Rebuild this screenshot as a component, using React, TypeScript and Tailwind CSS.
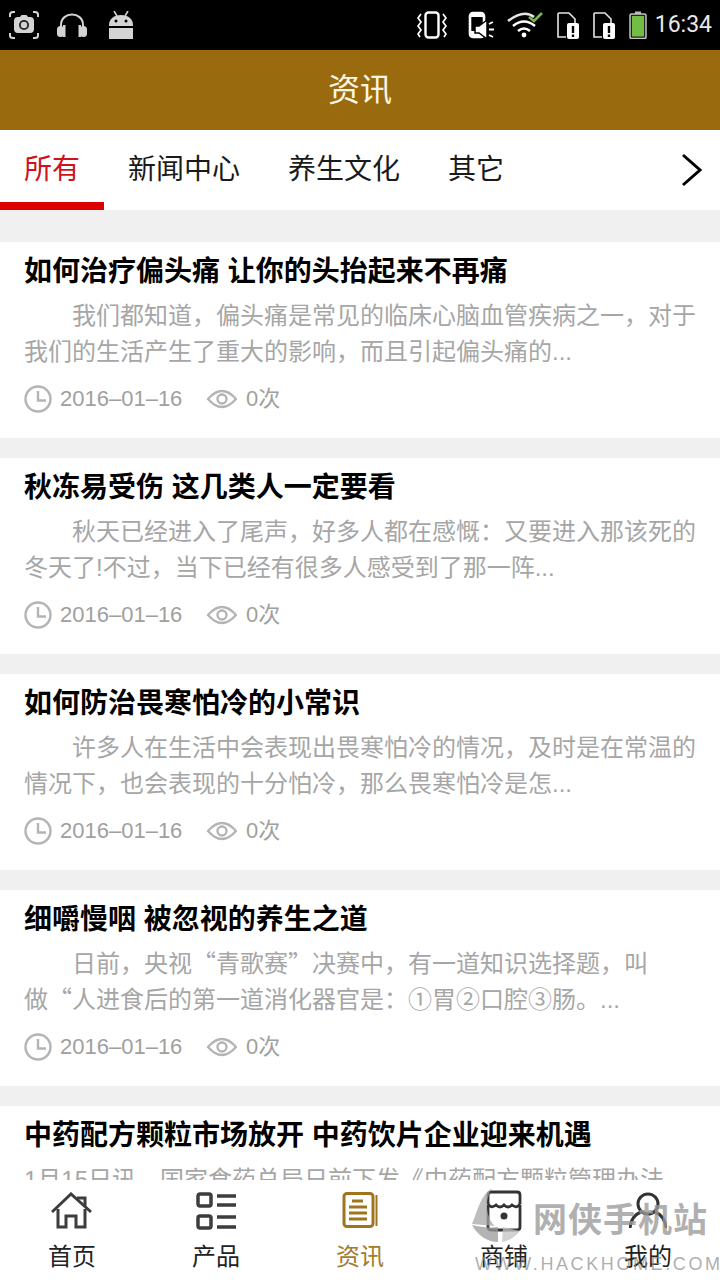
const FONT = 'font-["Liberation_Sans","Noto_Sans_CJK_SC",sans-serif]'

type Article = { title: string; lines: React.ReactNode[]; noIndent?: boolean }

const articles: Article[] = [
  {
    title: '如何治疗偏头痛 让你的头抬起来不再痛',
    lines: ['我们都知道，偏头痛是常见的临床心脑血管疾病之一，对于', '我们的生活产生了重大的影响，而且引起偏头痛的...'],
  },
  {
    title: '秋冻易受伤 这几类人一定要看',
    lines: ['秋天已经进入了尾声，好多人都在感慨：又要进入那该死的', '冬天了!不过，当下已经有很多人感受到了那一阵...'],
  },
  {
    title: '如何防治畏寒怕冷的小常识',
    lines: ['许多人在生活中会表现出畏寒怕冷的情况，及时是在常温的', '情况下，也会表现的十分怕冷，那么畏寒怕冷是怎...'],
  },
  {
    title: '细嚼慢咽 被忽视的养生之道',
    lines: [
      <>日前，央视<span className='font-["Noto_Sans_CJK_SC"] leading-none'>“青歌赛”</span>决赛中，有一道知识选择题，叫</>,
      <>做<span className='font-["Noto_Sans_CJK_SC"] leading-none'>“</span>人进食后的第一道消化器官是：①胃②口腔③肠。...</>,
    ],
  },
  {
    title: '中药配方颗粒市场放开 中药饮片企业迎来机遇',
    lines: ['1月15日讯，国家食药总局日前下发《中药配方颗粒管理办法', ''],
    noIndent: true,
  },
]

function StatusBar() {
  return (
    <div className="h-[50px] shrink-0 bg-black flex items-center justify-between pr-[8px] pl-[9px]">
      <div className="flex items-center gap-[18px]">
        <svg width="30" height="28" viewBox="0 0 30 28" fill="none" stroke="#d4d4d4">
          <path d="M1 6V3.5Q1 1 4 1H6M24 1H26Q29 1 29 3.5V6M1 22V24.5Q1 27 4 27H6M24 27H26Q29 27 29 24.5V22" strokeWidth="2" />
          <rect x="5" y="6" width="20" height="16" rx="4" fill="#d4d4d4" stroke="none" />
          <path d="M11 6L12.5 4H17.5L19 6Z" fill="#d4d4d4" stroke="none" />
          <circle cx="15" cy="14" r="5" fill="#222" stroke="none" />
          <circle cx="15" cy="14" r="3.2" fill="#d4d4d4" stroke="none" />
        </svg>
        <svg width="30" height="26" viewBox="0 0 30 26" fill="none">
          <path d="M4 15V13C4 -1 26 -1 26 13V15" stroke="#d4d4d4" strokeWidth="2" />
          <rect x="0" y="14" width="7" height="11" rx="3.5" fill="#d4d4d4" />
          <rect x="23" y="14" width="7" height="11" rx="3.5" fill="#d4d4d4" />
          <rect x="6" y="13" width="2.5" height="12" fill="#d4d4d4" />
          <rect x="21.5" y="13" width="2.5" height="12" fill="#d4d4d4" />
        </svg>
        <svg width="26" height="28" viewBox="0 0 26 28" fill="#d4d4d4" className="ml-[3px]">
          <path d="M1 14C1 8 6 4 13 4C20 4 25 8 25 14V15H1Z" />
          <path d="M6 0L9 5M20 0L17 5" stroke="#d4d4d4" strokeWidth="1.6" />
          <rect x="1" y="17" width="24" height="11" />
          <circle cx="8" cy="10" r="1.5" fill="#000" />
          <circle cx="18" cy="10" r="1.5" fill="#000" />
        </svg>
      </div>
      <div className="flex items-center">
        <svg width="30" height="28" viewBox="0 0 30 28" fill="none" stroke="#fff" strokeWidth="2.4" className="mr-[21px]">
          <rect x="8.5" y="1.500" width="13" height="25" rx="3" />
          <path d="M4 3L1 7L4 11L1 15L4 19L1 23L3 26M26 3L29 7L26 11L29 15L26 19L29 23L27 26" strokeWidth="1.7" />
        </svg>
        <svg width="26" height="28" viewBox="0 0 26 28" className="mr-[13px]">
          <rect x="2" y="2" width="14" height="24" rx="3" fill="none" stroke="#fff" strokeWidth="2.6" />
          <rect x="2" y="2" width="14" height="4" fill="#fff" />
          <rect x="2" y="20" width="14" height="6" fill="#fff" />
          <path d="M19 9L11 15H7V22H11L19 28Z" fill="#fff" stroke="#000" strokeWidth="1.500" />
          <path d="M21 13L25 11M21 18.500H26M21 24L25 26" stroke="#fff" strokeWidth="1.800" />
        </svg>
        <svg width="36" height="26" viewBox="0 0 36 26" fill="none" className="mr-[14px]">
          <path d="M1 9Q17 -3 27 5" stroke="#e5e5e5" strokeWidth="2.6" />
          <path d="M6 14Q17 5 28 14" stroke="#fff" strokeWidth="2.6" />
          <path d="M11 19Q17 14 23 19" stroke="#fff" strokeWidth="2.6" />
          <circle cx="17" cy="23" r="2.4" fill="#fff" />
          <path d="M22 5L27 9L35 1" stroke="#7ab648" strokeWidth="2.6" />
        </svg>
        <SimIcon className="mr-[14px]" />
        <SimIcon className="mr-[14px]" />
        <svg width="18" height="28" viewBox="0 0 18 28" className="mr-[8px]">
          <rect x="6" y="0.500" width="6" height="3" fill="#bbb" />
          <rect x="1" y="3" width="16" height="24.500" rx="1.500" fill="#222" stroke="#c4c4c4" strokeWidth="1.500" />
          <rect x="3" y="5" width="12" height="20.500" fill="#74bd44" />
        </svg>
        <span className="text-[23px] leading-[30px] text-[#e8e8e8] font-['Roboto',sans-serif]">16:34</span>
      </div>
    </div>
  )
}

function SimIcon({ className }: { className: string }) {
  return (
    <svg width="22" height="27" viewBox="0 0 22 27" className={className}>
      <path d="M1 24V2Q1 1 2 1H12L18 7V11" fill="none" stroke="#e5e5e5" strokeWidth="1.6" />
      <path d="M1 24V25H9" fill="none" stroke="#e5e5e5" strokeWidth="1.6" />
      <rect x="10" y="11" width="12" height="16" rx="2" fill="#fff" />
      <rect x="14.800" y="14" width="2.400" height="7" fill="#000" />
      <rect x="14.800" y="22.500" width="2.400" height="2.500" fill="#000" />
    </svg>
  )
}

function ArticleCard({ article }: { article: Article }) {
  return (
    <div className="bg-white h-[196px] shrink-0 px-[24px] pt-[12px] mb-[20px]">
      <h2 className="text-[28px] leading-[36px] font-bold text-black whitespace-nowrap">{article.title}</h2>
      <div className="mt-[8px] text-[24px] leading-[36px] text-[#a6a6a6] whitespace-nowrap">
        <p className={article.noIndent ? '' : 'pl-[48px]'}>{article.lines[0]}</p>
        <p>{article.lines[1]}</p>
      </div>
      <div className="mt-[11px] flex items-center text-[22px] leading-[36px] text-[#a0a0a0]">
        <svg width="28" height="28" viewBox="0 0 28 28" fill="none" stroke="#b4b4b4" strokeWidth="2.400">
          <circle cx="14" cy="14" r="12.500" />
          <path d="M14 6V15.500H22" />
        </svg>
        <span className="ml-[8px] w-[124px] whitespace-nowrap">2016–01–16</span>
        <svg width="30" height="24" viewBox="0 0 30 24" fill="none" stroke="#b4b4b4" strokeWidth="2.400" className="ml-[23px]">
          <path d="M1 12Q15 -4 29 12Q15 28 1 12Z" />
          <circle cx="15" cy="12" r="4.500" />
        </svg>
        <span className="ml-[9px]">0次</span>
      </div>
    </div>
  )
}

function NavItem({ label, active, children }: { label: string; active?: boolean; children: React.ReactNode }) {
  return (
    <div className="flex-1 flex flex-col items-center">
      <div className="h-[42px] mt-[10px] flex items-center justify-center">{children}</div>
      <span className={`mt-[9px] text-[24px] leading-[32px] ${active ? 'text-[#a47c2b]' : 'text-[#222]'}`}>{label}</span>
    </div>
  )
}

export default function App() {
  return (
    <div className={`w-[720px] h-[1280px] relative overflow-hidden flex flex-col bg-[#f0f0f0] ${FONT}`}>
      <StatusBar />
      <header className="h-[80px] shrink-0 bg-[#996a0e] flex items-center justify-center text-[32px] text-[#fdf6e6]">资讯</header>

      <nav className="h-[80px] shrink-0 bg-white flex items-start text-[28px] text-[#1a1a1a] relative">
        <div className="h-[80px] px-[24px] pt-[22px] leading-[36px] text-[#d0121b] border-b-[8px] border-[#dc0000]">所有</div>
        <div className="px-[24px] pt-[22px] leading-[36px]">新闻中心</div>
        <div className="px-[24px] pt-[22px] leading-[36px]">养生文化</div>
        <div className="px-[24px] pt-[22px] leading-[36px]">其它</div>
        <svg width="22" height="34" viewBox="0 0 22 34" fill="none" stroke="#000" strokeWidth="3" className="ml-auto mr-[17px] mt-[23px]">
          <path d="M2 2L19 17L2 32" />
        </svg>
      </nav>

      <main className="flex-1 min-h-0 overflow-hidden pt-[32px]">
        {articles.map((a) => (
          <ArticleCard key={a.title} article={a} />
        ))}
      </main>

      <footer className="h-[100px] shrink-0 bg-white flex">
        <NavItem label="首页">
          <svg width="42" height="38" viewBox="0 0 42 38" fill="none" stroke="#3d3d3d" strokeWidth="3">
            <path d="M1 20L20 2L40 20" />
            <path d="M26 6H34V15" />
            <path d="M7 17V35H15V24H25V35H34V17" />
          </svg>
        </NavItem>
        <NavItem label="产品">
          <svg width="40" height="38" viewBox="0 0 40 38" fill="none" stroke="#3d3d3d" strokeWidth="3.500">
            <rect x="2" y="2" width="13" height="12" rx="2" />
            <rect x="2" y="24" width="13" height="12" rx="2" />
            <path d="M21 4H40M21 13H40M21 25H40M21 35H40" />
          </svg>
        </NavItem>
        <NavItem label="资讯" active>
          <svg width="36" height="38" viewBox="0 0 36 38" fill="none" stroke="#a0741f" strokeWidth="3">
            <rect x="2" y="1.500" width="29" height="33" rx="3" />
            <path d="M34.500 3V34" strokeWidth="2" />
            <path d="M10 9H21M7 15H25M7 21H25M7 27H25" strokeWidth="2.800" />
          </svg>
        </NavItem>
        <NavItem label="商铺">
          <svg width="36" height="42" viewBox="0 0 36 42" fill="none" stroke="#333" strokeWidth="2.800">
            <path d="M2 14V5Q2 2 5 2H31Q34 2 34 5V14" />
            <path d="M2 14Q5 19 10 15Q14 19 18 15Q22 19 26 15Q31 19 34 14" />
            <path d="M2 15V37Q2 40 5 40H31Q34 40 34 37V15" />
            <circle cx="18" cy="26" r="3.500" fill="#333" stroke="none" />
          </svg>
        </NavItem>
        <NavItem label="我的">
          <svg width="38" height="38" viewBox="0 0 38 38" fill="none" stroke="#333" strokeWidth="3">
            <circle cx="19" cy="12" r="10" />
            <path d="M1 36Q2 24 12 20M37 36Q36 24 26 20" />
          </svg>
        </NavItem>
      </footer>

      {/* filigrane par-dessus la barre du bas */}
      <div className="absolute left-[470px] top-[1186px] w-[250px] h-[94px] pointer-events-none">
        <svg width="52" height="58" viewBox="0 0 52 58" className="absolute left-0 top-0 opacity-75">
          <path d="M22 2C10 10 8 24 2 38L25 40C16 32 14 14 22 2Z" fill="#a8a8a8" />
          <path d="M2 39C8 50 18 56 28 56L28 41C20 42 10 41 2 39Z" fill="#9a9a9a" />
          <path d="M32 56C40 55 46 50 50 45L33 41Z" fill="#c4c4c4" />
        </svg>
        <span className="absolute left-[63px] top-[12px] text-[34px] leading-[44px] font-bold tracking-[1px] text-[#9b9b9b]/80 whitespace-nowrap">网侠手机站</span>
        <span className="absolute left-[5px] top-[60px] text-[18px] leading-[36px] tracking-[2.600px] text-[#8a8a8a]/70 whitespace-nowrap">WWW.HACKHOME.COM</span>
      </div>
    </div>
  )
}
